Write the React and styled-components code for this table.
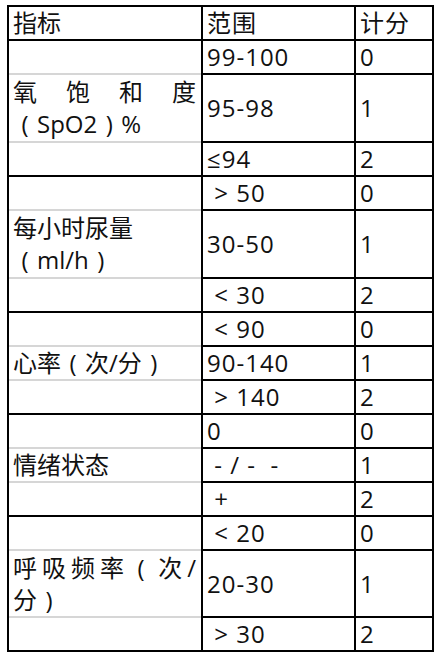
import React from 'react';
import styled, {createGlobalStyle} from 'styled-components';

const Global = createGlobalStyle`
  html, body {
    margin: 0;
    padding: 0;
    background: #fff;
  }
  body {
    font-family: "Open Sans", "Noto Sans CJK SC", sans-serif;
    color: #111;
  }
`;

const Table = styled.div`
  display: grid;
  grid-template-columns: 192px 151px 76px;
  grid-auto-rows: minmax(32px, auto);
  gap: 2px;
  padding: 2px;
  width: max-content;
  margin: 5px 0 0 7px;
  background: #000;
  font-size: 24px;
`;

const Cell = styled.div`
  grid-column: ${props => props.col};
  display: flex;
  align-items: center;
  min-height: ${props => props.tall ? `${props.tall}px` : '32px'};
  padding: 0 4px;
  line-height: 32px;
  background: #fff;
  letter-spacing: ${props => props.col === 1 ? '0' : '1px'};
  white-space: pre;
`;

const Label = styled.div`
  grid-column: 1;
  grid-row: span 3;
  display: grid;
  grid-template-rows: subgrid;
  background: #d6d6d6;
`;

const Slot = styled.div`
  grid-column: 1;
  grid-row: ${props => props.row};
  background: #fff;
`;

const LabelText = styled.div`
  grid-column: 1;
  grid-row: 1 / -1;
  align-self: center;
  z-index: 1;
  padding: 0 5px 0 4px;
  line-height: 32px;
  text-align: justify;
`;

// full-width bracket drawn centred in its em box, as in the source sheet
const Paren = styled.span`
  display: inline-block;
  width: 1em;
  text-align: center;
`;

const Nowrap = styled.span`
  white-space: nowrap;
`;

const groups = [
  {
    label: <>氧饱和度<Nowrap><Paren>(</Paren>SpO2<Paren>)</Paren>%</Nowrap></>,
    rows: [['99-100', '0'], ['95-98', '1', 66], ['≤94', '2']],
  },
  {
    label: <>每小时尿量<br /><Paren>(</Paren>ml/h<Paren>)</Paren></>,
    rows: [['\u00a0> 50', '0'], ['30-50', '1', 66], ['\u00a0< 30', '2']],
  },
  {
    label: <>心率<Paren>(</Paren>次/分<Paren>)</Paren></>,
    rows: [['\u00a0< 90', '0'], ['90-140', '1'], ['\u00a0> 140', '2']],
  },
  {
    label: '情绪状态',
    rows: [['0', '0'], ['\u00a0- / -  -', '1'], ['\u00a0+', '2']],
  },
  {
    label: <>呼吸频率<Paren>(</Paren>次/<Nowrap>分<Paren>)</Paren></Nowrap></>,
    rows: [['\u00a0< 20', '0'], ['20-30', '1', 65], ['\u00a0> 30', '2']],
  },
];

export default function App() {
  return (
    <>
      <Global />
      <Table lang="zh-CN">
        <Cell col={1}>指标</Cell>
        <Cell col={2}>范围</Cell>
        <Cell col={3}>计分</Cell>
        {groups.map((g, i) => (
          <React.Fragment key={i}>
            <Label>
              <Slot row={1} />
              <Slot row={2} />
              <Slot row={3} />
              <LabelText>{g.label}</LabelText>
            </Label>
            {g.rows.map(([range, score, tall], j) => (
              <React.Fragment key={j}>
                <Cell col={2} tall={tall}>{range}</Cell>
                <Cell col={3} tall={tall}>{score}</Cell>
              </React.Fragment>
            ))}
          </React.Fragment>
        ))}
      </Table>
    </>
  );
}
